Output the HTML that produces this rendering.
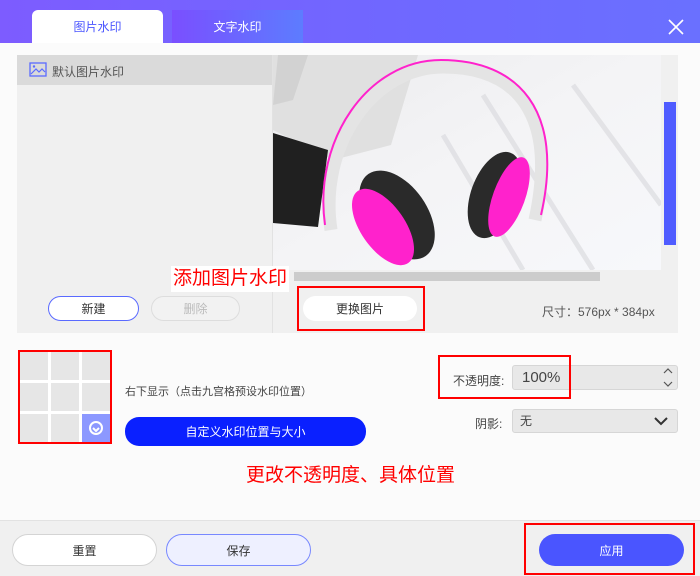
<!DOCTYPE html>
<html><head><meta charset="utf-8"><style>
*{margin:0;padding:0;box-sizing:border-box}
body{width:700px;height:576px;overflow:hidden;background:#fbfbfb;font-family:"Liberation Sans","Noto Sans CJK SC",sans-serif;font-size:12px;color:#333;position:relative}
.a{position:absolute}
.btn{position:absolute;border-radius:14px;display:flex;align-items:center;justify-content:center;font-size:12px}
.rb{position:absolute;border:2px solid #f00}
</style></head><body>
<div class="a" style="left:0;top:0;width:700px;height:43px;background:linear-gradient(90deg,#7d5cff,#6f68ff 60%,#6a70ff)"></div>
<div class="a" style="left:32px;top:10px;width:131px;height:33px;background:#fff;border-radius:6px 6px 0 0;color:#4a55ff;font-size:12px;text-align:center;line-height:34px">图片水印</div>
<div class="a" style="left:172px;top:10px;width:131px;height:33px;background:linear-gradient(90deg,#7a4fff,#5d7cff);color:#fff;text-align:center;line-height:34px">文字水印</div>
<svg class="a" style="left:668px;top:19px" width="16" height="16"><path d="M1 1L15 15M15 1L1 15" stroke="#fff" stroke-width="1.6"/></svg>

<div class="a" style="left:17px;top:55px;width:661px;height:278px;background:#f0f0f0"></div>
<div class="a" style="left:17px;top:55px;width:255px;height:30px;background:#dadada"></div>
<svg class="a" style="left:29px;top:62px" width="18" height="15"><rect x="1" y="1" width="16" height="13" fill="none" stroke="#5a6aff" stroke-width="1.3"/><path d="M2 12L7 7L10 10L13 7L16 10" fill="none" stroke="#5a6aff" stroke-width="1.2"/><circle cx="5" cy="4.5" r="1.2" fill="#5a6aff"/></svg>
<div class="a" style="left:52px;top:63px;color:#555">默认图片水印</div>
<div class="a" style="left:272px;top:55px;width:1px;height:278px;background:#e2e2e2"></div>

<svg class="a" style="left:273px;top:55px" width="388" height="215" viewBox="0 0 388 215">
<defs><linearGradient id="bg" x1="0" y1="0" x2="1" y2="1"><stop offset="0" stop-color="#ececee"/><stop offset=".5" stop-color="#f4f4f6"/><stop offset="1" stop-color="#f7f8fb"/></linearGradient></defs>
<rect width="388" height="215" fill="url(#bg)"/>
<path d="M0 0H145L118 90L60 105L0 75Z" fill="#e0e0e0"/>
<path d="M5 0L35 0L20 45L0 50Z" fill="#d2d2d2"/>
<path d="M0 78L55 95L45 172L0 168Z" fill="#202020"/>
<path d="M170 80L250 215M210 40L320 215M300 30L388 150" stroke="#dcdce0" stroke-width="5" opacity=".7"/>
<path d="M58 175C45 90 100 12 170 12C245 12 285 60 262 165" fill="none" stroke="#e4e4e4" stroke-width="13"/>
<path d="M52 170C40 85 95 5 168 5C245 5 292 55 268 160" fill="none" stroke="#ff22cc" stroke-width="2"/>
<ellipse cx="124" cy="160" rx="30" ry="50" transform="rotate(-35 124 160)" fill="#2a2a2a"/>
<ellipse cx="110" cy="172" rx="22" ry="44" transform="rotate(-35 110 172)" fill="#ff22cc"/>
<ellipse cx="222" cy="140" rx="24" ry="45" transform="rotate(20 222 140)" fill="#2a2a2a"/>
<ellipse cx="236" cy="142" rx="16" ry="42" transform="rotate(20 236 142)" fill="#ff22cc"/>
</svg>
<div class="a" style="left:664px;top:102px;width:12px;height:143px;background:#4f5cff"></div>
<div class="a" style="left:294px;top:272px;width:306px;height:9px;background:#cccccc"></div>

<div class="a" style="left:171px;top:266px;background:#fff;color:#f00;font-size:19px;line-height:26px;padding:0 2px">添加图片水印</div>
<div class="btn" style="left:48px;top:296px;width:91px;height:25px;background:#fff;border:1px solid #5a6aff">新建</div>
<div class="btn" style="left:151px;top:296px;width:89px;height:25px;background:#f2f2f2;border:1px solid #ddd;color:#bbb">删除</div>
<div class="rb" style="left:297px;top:286px;width:128px;height:45px"></div>
<div class="btn" style="left:303px;top:296px;width:114px;height:25px;background:#fff">更换图片</div>
<div class="a" style="left:542px;top:303px;color:#555">尺寸：576px * 384px</div>

<div class="a" style="left:20px;top:352px;width:90px;height:90px;display:grid;grid-template-columns:repeat(3,1fr);grid-template-rows:repeat(3,1fr);gap:3px;background:#fff">
<div style="background:#e6e6e6"></div><div style="background:#e6e6e6"></div><div style="background:#e6e6e6"></div>
<div style="background:#e6e6e6"></div><div style="background:#e6e6e6"></div><div style="background:#e6e6e6"></div>
<div style="background:#e6e6e6"></div><div style="background:#e6e6e6"></div><div style="background:#8c98ff;display:flex;align-items:center;justify-content:center"><svg width="16" height="16"><circle cx="8" cy="8" r="6" fill="none" stroke="#fff" stroke-width="2"/><path d="M5 8L8 11L11 8" fill="none" stroke="#fff" stroke-width="2"/></svg></div>
</div>
<div class="rb" style="left:18px;top:350px;width:94px;height:94px"></div>
<div class="a" style="left:125px;top:383px;color:#444;font-size:11px">右下显示（点击九宫格预设水印位置）</div>
<div class="btn" style="left:125px;top:417px;width:241px;height:29px;background:#0a20ff;color:#fff">自定义水印位置与大小</div>

<div class="a" style="left:453px;top:372px;color:#444">不透明度:</div>
<div class="a" style="left:512px;top:365px;width:166px;height:25px;background:#e8e8e8;border:1px solid #d6d6d6;border-radius:3px;font-size:15px;color:#444;padding-left:9px;line-height:24px">100%</div>
<svg class="a" style="left:663px;top:368px" width="10" height="20"><path d="M1 5L5 1L9 5M1 14L5 18L9 14" fill="none" stroke="#555" stroke-width="1.2"/></svg>
<div class="rb" style="left:438px;top:355px;width:133px;height:44px"></div>
<div class="a" style="left:475px;top:415px;color:#444">阴影:</div>
<div class="a" style="left:512px;top:409px;width:166px;height:24px;background:#e8e8e8;border:1px solid #d6d6d6;border-radius:3px;color:#444;padding-left:7px;line-height:23px">无</div>
<svg class="a" style="left:654px;top:416px" width="14" height="10"><path d="M1 2L7 8L13 2" fill="none" stroke="#333" stroke-width="2"/></svg>

<div class="a" style="left:246px;top:463px;color:#f00;font-size:19px;line-height:26px">更改不透明度、具体位置</div>

<div class="a" style="left:0;top:520px;width:700px;height:56px;background:#f0f0f0;border-top:1px solid #e2e2e2"></div>
<div class="btn" style="left:12px;top:534px;width:145px;height:32px;background:#fff;border:1px solid #d4d4d4;border-radius:16px">重置</div>
<div class="btn" style="left:166px;top:534px;width:145px;height:32px;background:#eef0ff;border:1px solid #7888ff;border-radius:16px">保存</div>
<div class="btn" style="left:539px;top:534px;width:145px;height:32px;background:#4a55ff;color:#fff;border-radius:16px">应用</div>
<div class="rb" style="left:524px;top:523px;width:171px;height:52px"></div>
</body></html>
